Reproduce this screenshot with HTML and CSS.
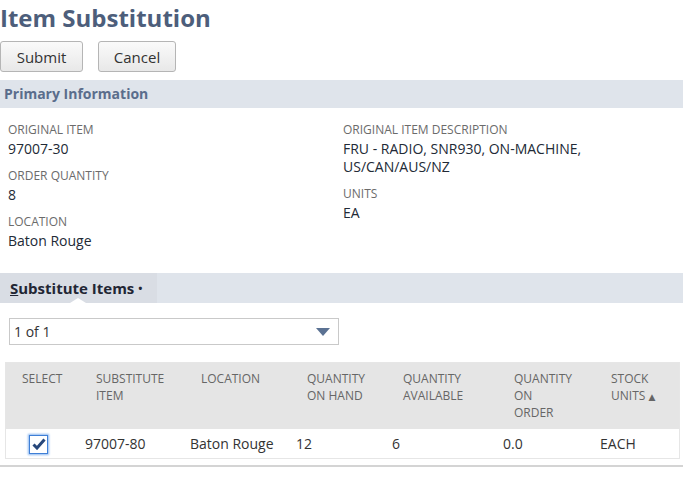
FILE: index.html
```html
<!DOCTYPE html>
<html>
<head>
<meta charset="utf-8">
<link rel="stylesheet" href="styles.css">
</head>
<body>
<h1 class="title">Item Substitution</h1>
<div class="actions">
  <button class="btn btn-submit">Submit</button>
  <button class="btn btn-cancel">Cancel</button>
</div>
<div class="section-bar">Primary Information</div>
<div class="fields">
  <div class="col col-left">
    <div class="field"><div class="label">Original Item</div><div class="value">97007-30</div></div>
    <div class="field"><div class="label">Order Quantity</div><div class="value">8</div></div>
    <div class="field"><div class="label">Location</div><div class="value">Baton Rouge</div></div>
  </div>
  <div class="col col-right">
    <div class="field"><div class="label">Original Item Description</div><div class="value">FRU - RADIO, SNR930, ON-MACHINE,<br>US/CAN/AUS/NZ</div></div>
    <div class="field"><div class="label">Units</div><div class="value">EA</div></div>
  </div>
</div>
<div class="tab-bar">
  <div class="tab"><span class="ul">S</span>ubstitute Items <span class="dot">•</span><span class="notch"></span></div>
</div>
<div class="pager">
  <div class="select"><span>1 of 1</span><svg width="14" height="8" viewBox="0 0 14 8"><path d="M0 0 H14 L7 8 Z" fill="#5b7293"/></svg></div>
</div>
<div class="table-wrap">
  <table class="grid">
    <thead>
      <tr>
        <th class="c-sel">Select</th>
        <th class="c-item">Substitute<br>Item</th>
        <th class="c-loc">Location</th>
        <th class="c-qoh">Quantity<br>On Hand</th>
        <th class="c-qa">Quantity<br>Available</th>
        <th class="c-qoo">Quantity<br>On<br>Order</th>
        <th class="c-su">Stock<br>Units <span class="sort">▲</span></th>
      </tr>
    </thead>
    <tbody>
      <tr>
        <td class="c-sel"><span class="check"><svg width="14" height="12" viewBox="0 0 14 12"><path d="M1.5 6.5 L5 10 L12.5 1.5" fill="none" stroke="#27477a" stroke-width="3"/></svg></span></td>
        <td>97007-80</td>
        <td>Baton Rouge</td>
        <td>12</td>
        <td>6</td>
        <td>0.0</td>
        <td>EACH</td>
      </tr>
    </tbody>
  </table>
</div>
<div class="bottom-line"></div>
</body>
</html>
```
FILE: styles.css
```css
* { box-sizing: border-box; }
html, body { margin: 0; padding: 0; background: #fff; }
body { font-family: "Open Sans", "DejaVu Sans", sans-serif; color: #262626; }

.title {
  margin: 0;
  padding: 2px 0 0 0;
  font-size: 24px;
  line-height: 31px;
  font-weight: 700;
  color: #4d5e7b;
}

.actions {
  display: flex;
  gap: 15px;
  padding-top: 8px;
  height: 47px;
  align-items: flex-start;
}
.btn {
  font-family: "Open Sans", sans-serif;
  font-size: 15px;
  color: #333;
  height: 31px;
  padding: 0;
  border: 1px solid #b5b5b5;
  border-radius: 3px;
  background: linear-gradient(#fafafa, #e8e8e8);
}
.btn-submit { width: 83px; }
.btn-cancel { width: 78px; }

.section-bar {
  height: 28px;
  line-height: 28px;
  padding-left: 4px;
  background: #dfe4eb;
  color: #5a6d8c;
  font-weight: 700;
  font-size: 14px;
}

.fields {
  display: flex;
  padding: 13px 0 0 8px;
  height: 165px;
}
.col-left { width: 335px; }
.col-right { flex: 1; }
.field { margin-bottom: 9px; }
.label {
  font-size: 12px;
  line-height: 18px;
  text-transform: uppercase;
  color: #6b6b6b;
}
.value {
  padding-top: 1px;
  font-size: 14px;
  line-height: 18px;
  color: #222a36;
}

.tab-bar {
  height: 30px;
  background: #dfe4eb;
}
.tab {
  position: relative;
  width: 157px;
  height: 30px;
  line-height: 30px;
  padding-left: 10px;
  background: #d9dde4;
  font-weight: 700;
  font-size: 15px;
  color: #222634;
}
.ul { text-decoration: underline; }
.dot { font-size: 11px; vertical-align: 2px; }
.notch {
  position: absolute;
  left: 70px;
  bottom: 0;
  width: 0; height: 0;
  border-left: 8px solid transparent;
  border-right: 8px solid transparent;
  border-bottom: 5px solid #fff;
}

.pager { padding: 15px 0 0 9px; height: 59px; }
.select {
  width: 330px;
  height: 27px;
  border: 1px solid #c9c9c9;
  display: flex;
  align-items: center;
  justify-content: space-between;
  padding: 0 8px 0 4px;
  font-size: 14px;
  color: #333;
}

.table-wrap {
  margin: 0 3px 0 5px;
  border: 1px solid #e6e6e6;
}
.grid {
  width: 100%;
  border-collapse: collapse;
  table-layout: fixed;
}
.grid th {
  background: #e5e5e5;
  text-align: left;
  vertical-align: top;
  font-weight: 400;
  font-size: 12px;
  line-height: 17px;
  text-transform: uppercase;
  color: #666;
  padding: 7px 0 0 11px;
  height: 66px;
}
.grid td {
  height: 29px;
  font-size: 14px;
  color: #333;
  padding: 0;
  vertical-align: middle;
}
.grid th:first-child { padding-left: 16px; }
.grid td:first-child { padding-left: 23px; }
.c-sel { width: 79px; }
.c-item { width: 105px; }
.c-loc { width: 106px; }
.c-qoh { width: 96px; }
.c-qa { width: 111px; }
.c-qoo { width: 97px; }
.sort { font-size: 9px; color: #666; }

.check {
  display: inline-flex;
  align-items: center;
  justify-content: center;
  width: 19px;
  height: 19px;
  border: 1px solid #3f7fd6;
  box-shadow: 0 0 2px 1px #8cb8f0;
  background: #fff;
  vertical-align: middle;
}

.bottom-line {
  margin-top: 6px;
  height: 2px;
  background: #d4d4d4;
}
```
